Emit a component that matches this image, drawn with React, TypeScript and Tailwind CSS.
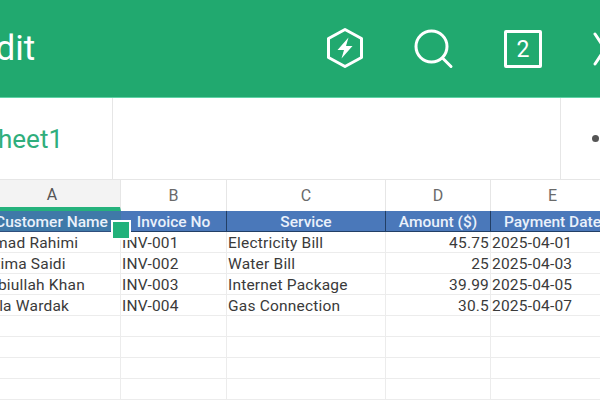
const COLS = ["A", "B", "C", "D", "E"];

const HEADERS = ["Customer Name", "Invoice No", "Service", "Amount ($)", "Payment Date"];

const ROWS = [
  ["Ahmad Rahimi", "INV-001", "Electricity Bill", "45.75", "2025-04-01"],
  ["Fatima Saidi", "INV-002", "Water Bill", "25", "2025-04-03"],
  ["Habiullah Khan", "INV-003", "Internet Package", "39.99", "2025-04-05"],
  ["Laila Wardak", "INV-004", "Gas Connection", "30.5", "2025-04-07"],
  ["", "", "", "", ""],
  ["", "", "", "", ""],
  ["", "", "", "", ""],
  ["", "", "", "", ""],
];

const GRID = "grid grid-cols-[147px_106px_159px_105px_124px] ml-[-26px] w-[641px]";

function BoltIcon() {
  return (
    <svg width="40" height="42" viewBox="0 0 40 42" fill="none">
      <path
        d="M20 2.5 L36.5 11.5 V30.5 L20 39.5 L3.5 30.5 V11.5 Z"
        stroke="white"
        strokeWidth="3"
        strokeLinejoin="round"
      />
      <path d="M23.5 10.5 L12.5 23 H19 L16.5 31.5 L27.5 19 H21 Z" fill="white" />
    </svg>
  );
}

function SearchIcon() {
  return (
    <svg width="40" height="40" viewBox="0 0 40 40" fill="none" stroke="white" strokeWidth="3">
      <circle cx="17.5" cy="17.5" r="15.5" />
      <path d="M28.5 29 L37 37.5" strokeLinecap="round" />
    </svg>
  );
}

export default function App() {
  return (
    <div className="w-[600px] h-[400px] overflow-hidden bg-white font-['Roboto',sans-serif]">
      {/* Toolbar */}
      <div className="h-[98px] bg-[#21a96f] flex items-center border-b border-[#5fd3a6] overflow-hidden">
        <span className="ml-[-24px] w-[58px] text-right text-[35px] text-white leading-none">
          Edit
        </span>
        <div className="ml-[291px] mt-[-2px]">
          <BoltIcon />
        </div>
        <div className="ml-[49px] mt-[1px]">
          <SearchIcon />
        </div>
        <div className="ml-[50px] mt-[1px] w-[38px] h-[38px] shrink-0 border-[3px] border-white rounded-[2px] flex items-center justify-center text-white text-[23px] leading-none">
          2
        </div>
        <svg className="ml-[51px] shrink-0" width="24" height="40" viewBox="0 0 24 40" fill="none" stroke="white" strokeWidth="3" strokeLinecap="round">
          <path d="M2 5 L22 35 M22 5 L2 35" />
        </svg>
      </div>

      {/* Sheet tabs */}
      <div className="h-[82px] flex border-b border-[#e6e6e6]">
        <div className="w-[113px] border-r border-[#e6e6e6] flex items-center justify-end pr-[49px] shrink-0">
          <span className="text-[26px] text-[#2fae7c] whitespace-nowrap leading-none">Sheet1</span>
        </div>
        <div className="w-[448px] border-r border-[#e6e6e6] shrink-0" />
        <div className="flex items-center pl-[31px] gap-[6px]">
          <span className="w-[7px] h-[7px] rounded-full bg-[#555555] shrink-0" />
        </div>
      </div>

      {/* Spreadsheet */}
      <div className="relative">
        <div className={`${GRID} h-[31px]`}>
          {COLS.map((c, i) => (
            <div
              key={c}
              className={
                i === 0
                  ? "bg-[#f3f3f3] border-b-[4px] border-[#25b27c] border-r border-r-[#e6e6e6] flex items-center justify-center pl-[10px] pt-[2px] text-[16px] text-[#555555]"
                  : "border-r border-[#e6e6e6] flex items-center justify-center text-[16px] text-[#6a6a6a]"
              }
            >
              {c}
            </div>
          ))}
        </div>
        <div className={`${GRID} h-[21px] bg-[#4a78ba]`}>
          {HEADERS.map((h, i) => (
            <div
              key={h}
              className={
                "flex items-center justify-center pt-[3px] text-[15.5px] font-medium text-[#eaf1fb] whitespace-nowrap overflow-hidden border-b border-[#2f4f7d]" +
                (i === 0 ? " pl-[8px] bg-[#3f79a8]" : " border-r border-[#223f66]")
              }
            >
              {h}
            </div>
          ))}
        </div>
        {ROWS.map((row, r) => (
          <div key={r} className={`${GRID} h-[21px]`}>
            {row.map((v, i) => (
              <div
                key={i}
                className={
                  "border-r border-b border-[#ececec] flex items-center pt-[3px] text-[15.5px] text-[#3a3a3a] whitespace-nowrap overflow-hidden tracking-[0.2px] " +
                  (i === 3 ? "justify-end pr-[1px]" : i === 0 && r > 0 ? "pl-[4px]" : "pl-[1px]")
                }
              >
                {v}
              </div>
            ))}
          </div>
        ))}
        {/* Fill handle */}
        <div className="absolute left-[111px] top-[40px] w-[20px] h-[20px] bg-[#22b27a] border-2 border-white" />
      </div>
    </div>
  );
}
